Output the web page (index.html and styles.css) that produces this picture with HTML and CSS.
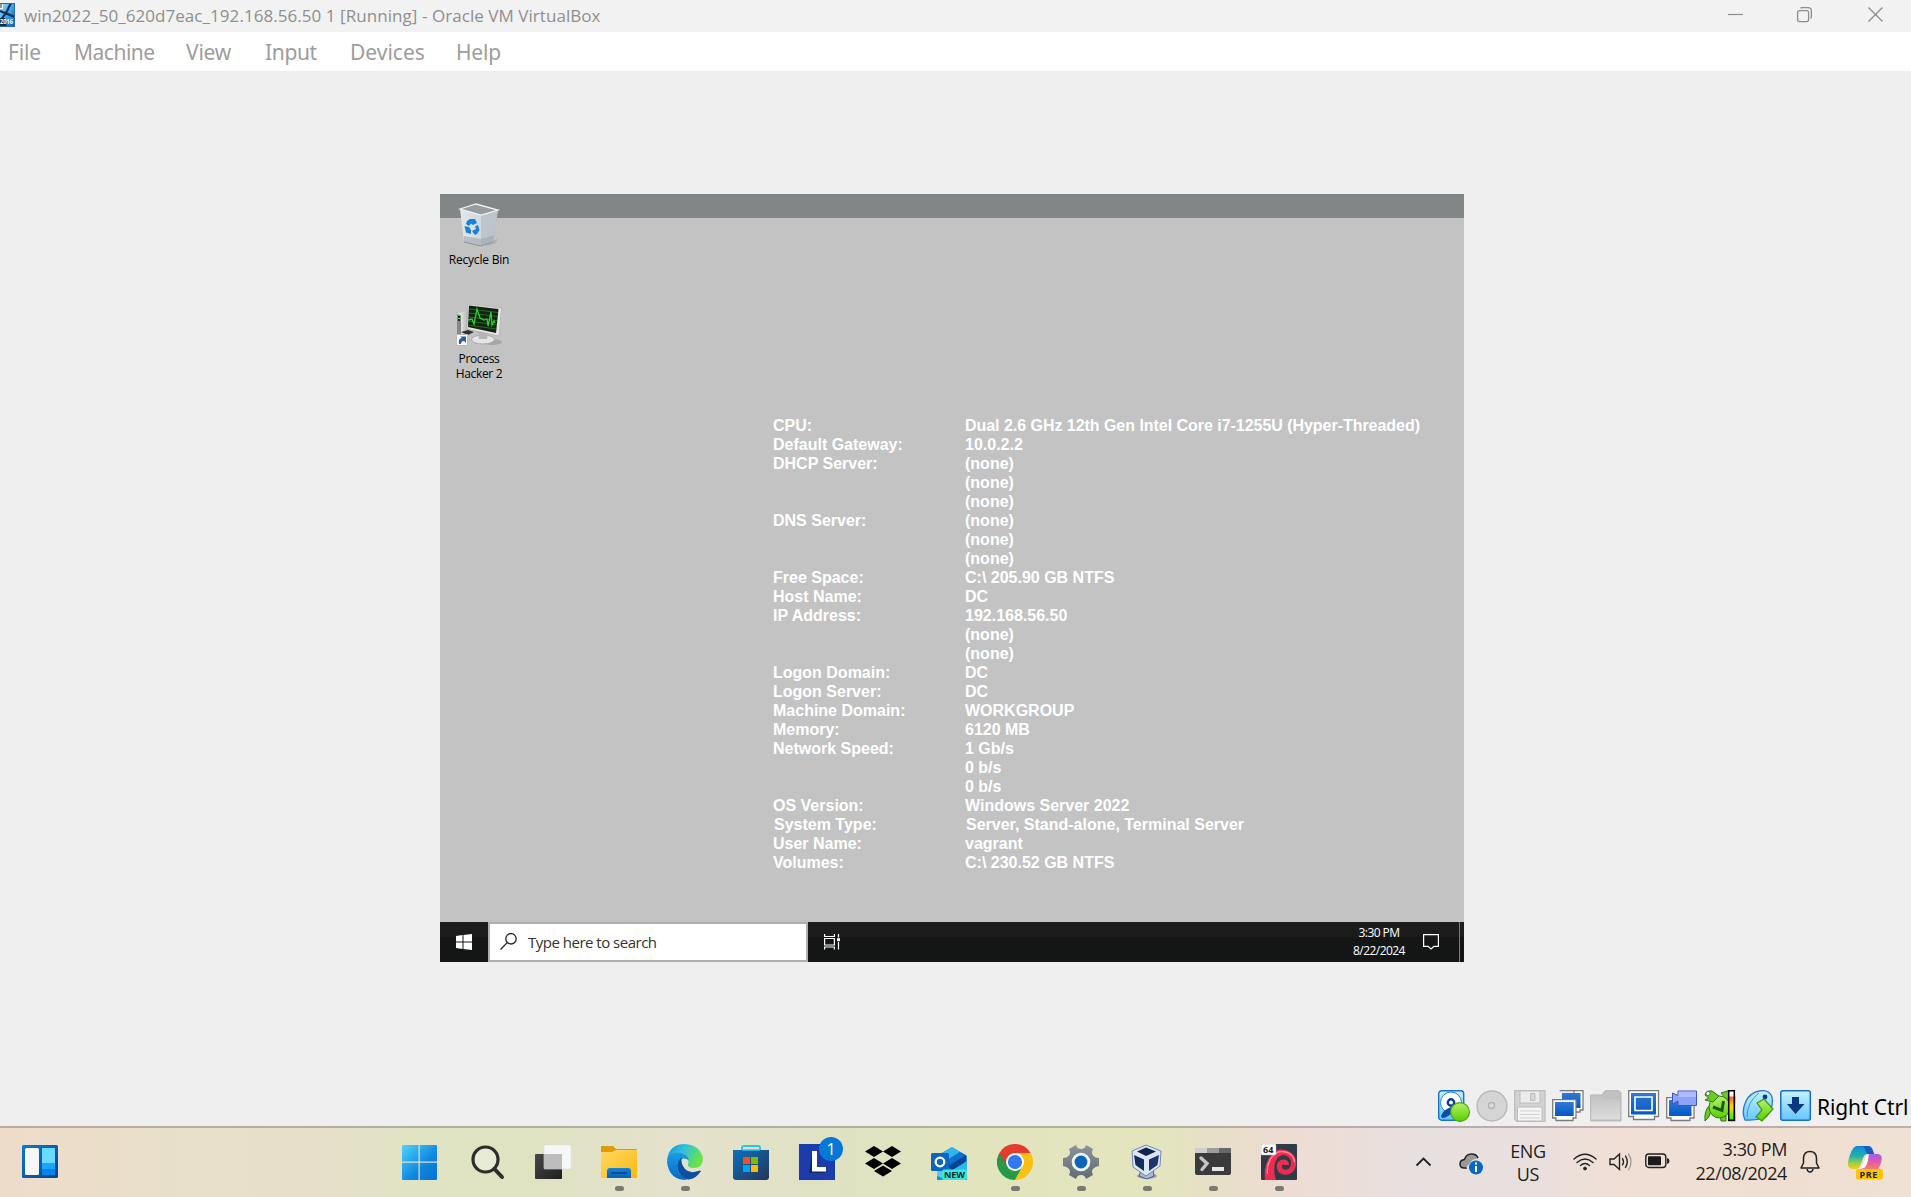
FILE: index.html
```html
<!DOCTYPE html>
<html lang="en">
<head>
<meta charset="utf-8">
<title>win2022_50_620d7eac_192.168.56.50 1 [Running] - Oracle VM VirtualBox</title>
<link rel="stylesheet" href="styles.css">
</head>
<body>
<div class="window">
  <header class="titlebar">
    <svg class="app-icon" width="15" height="24" viewBox="0 0 15 24">
      <defs><linearGradient id="ai" x1="0" y1="0" x2="1" y2="1"><stop offset="0" stop-color="#9fe0ff"/><stop offset=".5" stop-color="#35a5ee"/><stop offset="1" stop-color="#0b4fc0"/></linearGradient></defs>
      <rect width="15" height="24" fill="url(#ai)"/>
      <path d="M0 0H3V6H0z" fill="#f4f8fb"/><path d="M1 1v4" stroke="#333"/>
      <path d="M11 0L5 12M0 8L15 14M5 11L1 17" stroke="#12324f" stroke-width="2.2"/>
      <path d="M0 15H5L7 24H0z" fill="#102a4a"/>
      <text x="0" y="20.500" class="app-icon-text" textLength="13" lengthAdjust="spacingAndGlyphs">2016</text>
      <path d="M0 .5H14.5V23.5H0" fill="none" stroke="#2a6db0"/>
    </svg>
    <span class="title">win2022_50_620d7eac_192.168.56.50 1 [Running] - Oracle VM VirtualBox</span>
    <svg class="controls" width="156" height="16" viewBox="0 0 156 16" fill="none" stroke="#8d8d8d">
      <path d="M0 7.5H15" stroke-width="1.2"/>
      <rect x="69.6" y="3.6" width="11" height="11" rx="2" stroke-width="1.3"/>
      <path d="M72.500 1.200C73 .7 73.500 .6 74.500 .6H80Q83.400 .6 83.400 4V9Q83.400 11 82.500 11.500" stroke-width="1.3"/>
      <path d="M140.500 .5L154.500 14.500M154.500 .5L140.500 14.500" stroke-width="1.3"/>
    </svg>
  </header>
  <nav class="menubar">
    <span class="m-file">File</span><span class="m-machine">Machine</span><span class="m-view">View</span><span class="m-input">Input</span><span class="m-devices">Devices</span><span>Help</span>
  </nav>

  <main class="viewport">
    <section class="guest">
      <div class="guest-desktop">
        <div class="shortcuts">
          <div class="shortcut">
            <svg width="48" height="48" viewBox="0 0 48 48">
              <defs><linearGradient id="rb" x1="0" x2="1"><stop offset="0" stop-color="#e3e6ea"/><stop offset=".55" stop-color="#d3d8dd"/><stop offset="1" stop-color="#a9b2b9"/></linearGradient></defs>
              <path d="M28 40L42 36 39 41 30 43z" fill="#8b8b8b" opacity=".35"/>
              <path d="M4 6L25 12 42 7 37 39 25 43 8 39z" fill="url(#rb)"/>
              <path d="M25 12L42 7 37 39 25 43z" fill="#bcc5cc"/>
              <path d="M8 33L25 36 38 32 37 39 25 43 8 39z" fill="#9ea6ad" opacity=".6"/>
              <path d="M4 6L20 1 42 7 25 12z" fill="#979c9e"/>
              <path d="M4 6L20 1 42 7 25 12z" fill="none" stroke="#f1f3f4" stroke-width="1.300"/>
              <path d="M8 39L25 43 37 39" fill="none" stroke="#8e9499"/>
              <g fill="#1683d8"><path d="M11 18L14 16H19L21 20 17 22 15 20.500 13 23 10 21z"/><path d="M8.500 23L13 24 15 27V31L10 29.500z"/><path d="M16 28L20 26 19 23.500 22 22 23.500 27 21 31 19 32z"/></g>
            </svg>
            <p>Recycle Bin</p>
          </div>
          <div class="shortcut second">
            <svg width="48" height="48" viewBox="0 0 48 48">
              <defs><linearGradient id="ph" x1="0" x2="1"><stop offset="0" stop-color="#fff"/><stop offset="1" stop-color="#aaa"/></linearGradient></defs>
              <path d="M1 11L9 8 13 10V29L1 34z" fill="url(#ph)"/><path d="M1 11L5 12V34H1z" fill="#85878a"/><path d="M2 13H4V18H2z" fill="#222"/><path d="M2 15.500H4" stroke="#4f4"/>
              <ellipse cx="36" cy="39" rx="10" ry="3" fill="#888" opacity=".5"/>
              <ellipse cx="27" cy="36.500" rx="11.500" ry="4.500" fill="#e5e5e5" stroke="#a8a8a8"/>
              <path d="M22 28L32 30 31 36H23z" fill="#b4b4b4"/>
              <path d="M12 1L45.500 5 43 33 11 26z" fill="#e4e4e4" stroke="#aaa" stroke-width=".6"/>
              <path d="M13 2.500L42.500 6 40 30 12 24z" fill="#102212"/>
              <path d="M13 6L42 9.500M13 10L42 13.500M13 14L41 17.500M12.500 18L41 22M12.500 22L40 26" stroke="#28692b"/>
              <path d="M12 17L16 16 18 21 21 6 24 15 28 17 31 16 32 23 35 9 36 22 38 18 39 20" fill="none" stroke="#29cf33" stroke-width="1.300"/>
              <path d="M5 29l7-2 6 2-6 3z" fill="#333"/>
              <rect x=".5" y="31.500" width="11" height="11" fill="#fff" stroke="#bbb"/>
              <path d="M3 41Q2 35 6 35L4 33.500H10V40L8.300 38Q5 38 5 41z" fill="#2b5fa5"/>
            </svg>
            <p>Process<br>Hacker 2</p>
          </div>
        </div>
        <dl class="sysinfo">
          <dt>CPU:</dt><dd class="cpu">Dual 2.6 GHz 12th Gen Intel Core i7-1255U (Hyper-Threaded)</dd>
          <dt>Default Gateway:</dt><dd>10.0.2.2</dd>
          <dt>DHCP Server:</dt><dd>(none)<br>(none)<br>(none)</dd>
          <dt>DNS Server:</dt><dd>(none)<br>(none)<br>(none)</dd>
          <dt>Free Space:</dt><dd>C:\ 205.90 GB NTFS</dd>
          <dt>Host Name:</dt><dd>DC</dd>
          <dt>IP Address:</dt><dd>192.168.56.50<br>(none)<br>(none)</dd>
          <dt>Logon Domain:</dt><dd>DC</dd>
          <dt>Logon Server:</dt><dd>DC</dd>
          <dt>Machine Domain:</dt><dd>WORKGROUP</dd>
          <dt>Memory:</dt><dd>6120 MB</dd>
          <dt>Network Speed:</dt><dd>1 Gb/s<br>0 b/s<br>0 b/s</dd>
          <dt>OS Version:</dt><dd>Windows Server 2022</dd>
          <dt class="inset">System Type:</dt><dd class="inset">Server, Stand-alone, Terminal Server</dd>
          <dt>User Name:</dt><dd>vagrant</dd>
          <dt>Volumes:</dt><dd>C:\ 230.52 GB NTFS</dd>
        </dl>
      </div>
      <footer class="guest-taskbar">
        <svg class="g-start" width="16" height="16" viewBox="0 0 16 16" fill="#fff"><path d="M0 2L6.500 1V7.500H0zM7.500 .9L16 0V7.500H7.500zM0 8.500H6.500V15L0 14zM7.500 8.500H16V16L7.500 15z"/></svg>
        <div class="g-search">
          <svg width="18" height="17" viewBox="0 0 18 17" fill="none" stroke="#222" stroke-width="1.300"><circle cx="11" cy="5.800" r="5.200"/><path d="M7.200 9.600L.5 16.500"/></svg>
          <span>Type here to search</span>
        </div>
        <svg class="g-tasks" width="17" height="16" viewBox="0 0 17 16" fill="none" stroke="#fff" stroke-width="1.200"><path d="M.6 0V2.500H10.400V0M.6 15.500V13H10.400V15.500M.6 4.500H10.400V11H.6zM14.500 0V3.500M14.500 8V15.500"/><path d="M13 4.200H16V7.200H13z" fill="#fff" stroke="none"/></svg>
        <div class="g-clock">3:30 PM<br>8/22/2024</div>
        <svg class="g-note" width="16" height="16" viewBox="0 0 16 16" fill="none" stroke="#fff" stroke-width="1.200"><path d="M.6 .6H15.400V12.400H11L8 15 5 12.400H.6z"/></svg>
        <i class="g-peek"></i>
      </footer>
    </section>
  </main>

  <div class="statusbar">
    <svg width="32" height="32" viewBox="0 0 32 32">
      <defs><linearGradient id="cy" x1="0" y1="0" x2="0" y2="1"><stop offset="0" stop-color="#c4f2ff"/><stop offset="1" stop-color="#66c6ff"/></linearGradient><linearGradient id="gn" x1="0" y1="0" x2="0" y2="1"><stop offset="0" stop-color="#b6f06a"/><stop offset="1" stop-color="#58cf00"/></linearGradient><linearGradient id="bl" x1="0" y1="0" x2="0" y2="1"><stop offset="0" stop-color="#3377d6"/><stop offset="1" stop-color="#0259c8"/></linearGradient><linearGradient id="gy" x1="0" y1="0" x2="0" y2="1"><stop offset="0" stop-color="#c2c2c2"/><stop offset="1" stop-color="#dedede"/></linearGradient></defs>
      <rect x=".7" y=".7" width="25" height="29.500" rx="3" fill="url(#cy)" stroke="#1a6fd0" stroke-width="1.400"/>
      <circle cx="13" cy="12.500" r="10.500" fill="#fff" stroke="#2a7fd6"/><circle cx="13" cy="12.500" r="3.200" fill="#fff" stroke="#0b3e92" stroke-width="2.400"/>
      <path d="M3 26Q5 20 13 17L15 22Q9 28 4 28z" fill="#0c4cae"/>
      <circle cx="22" cy="22" r="9.400" fill="url(#gn)" stroke="#4ea414" stroke-width="1.200"/>
    </svg>
    <svg width="32" height="32" viewBox="0 0 32 32"><circle cx="16" cy="16" r="15" fill="#d5d5d5" stroke="#b9b9b9" stroke-width="1.400"/><circle cx="15.500" cy="15.500" r="3" fill="#ddd" stroke="#b3b3b3" stroke-width="1.300"/></svg>
    <svg width="32" height="32" viewBox="0 0 32 32" stroke="#bdbdbd"><path d="M.7 .7H31V31.300H3L.7 29z" fill="#d2d2d2" stroke-width="1.300"/><path d="M6 1H26V13H6z" fill="#ececec"/><path d="M16.500 3.500H21V10.500H16.500z" fill="#d5d5d5"/><path d="M3.500 17H28V31H3.500z" fill="#f4f4f4"/><path d="M6 21H26M6 24.500H26M6 28H26" stroke="#d2d2d2"/></svg>
    <svg width="32" height="32" viewBox="0 0 32 32"><path d="M7.600 .7H31V20H28V22H22V.7" fill="#fff" stroke="#7b7b7b" stroke-width="1.300"/><path d="M10 3H28.500V18H10z" fill="url(#bl)"/><path d="M.7 9.700H24V28H21V30.500H4V28H.7z" fill="#fff" stroke="#7b7b7b" stroke-width="1.300"/><path d="M3 12H21.700V26H3z" fill="url(#bl)"/></svg>
    <svg width="32" height="32" viewBox="0 0 32 32"><path d="M.7 5H12L15 .7H29L31 3V31H.7z" fill="#c1c1c1" stroke="#b5b5b5"/><path d="M.7 5.500H13L15.500 8H30.500V30H.7z" fill="url(#gy)" stroke="#bcbcbc"/></svg>
    <svg width="32" height="32" viewBox="0 0 32 32"><path d="M.7 .7H30.500V26.500H26.500V29.500H5.500V26.500H.7z" fill="#fff" stroke="#7b7b7b" stroke-width="1.300"/><path d="M3 3H28V24.500H3z" fill="url(#bl)"/><path d="M7 7H24V20.500H7z" fill="none" stroke="#fff" stroke-width="1.600"/></svg>
    <svg width="32" height="32" viewBox="0 0 32 32"><path d="M.7 7.700H28V28H24V30.500H5V28H.7z" fill="#fff" stroke="#7b7b7b" stroke-width="1.300"/><path d="M3 10H25.500V26H3z" fill="url(#bl)"/><path d="M6.500 3L12 5.500V1H30.500V15.500H12V11L6.500 14z" fill="#8fa2f8" stroke="#4055bd"/><path d="M12.500 1.500H30V7H12.500z" fill="#bac7ff" opacity=".7"/></svg>
    <svg width="32" height="32" viewBox="0 0 32 32"><defs><linearGradient id="ld" x1="0" y1="0" x2="0" y2="1"><stop offset="0" stop-color="#f52"/><stop offset=".4" stop-color="#fd0"/><stop offset="1" stop-color="#1e2"/></linearGradient></defs><g fill="#6cca20" stroke="#2b7a12"><path d="M17 3L24 .8 30 3V10L22 9z"/><path d="M6 15Q0 20 1 31Q6 27 7 21z"/><path d="M16 26H22V31H17z"/><ellipse cx="15.500" cy="17" rx="10.500" ry="11" fill="url(#gn)"/><path d="M1 5Q2 0 8 1L15 6 9 12 1 10 5 8z"/></g><circle cx="4" cy="3.500" r="2" fill="#fff" stroke="#333" stroke-width=".6"/><path d="M9 17L18 20.500 19.500 11" fill="none" stroke="#1d5a14" stroke-width="3"/><path d="M25 1H30V30H25z" fill="#fff"/><path d="M24 6.500H31.500V31.500H24z" fill="url(#ld)"/><path d="M24.700 .7H30.300V30.300H24.700z" fill="none" stroke="#000" stroke-width="1.500"/></svg>
    <svg width="32" height="32" viewBox="0 0 32 32"><path d="M3 30Q-1 22 4 11 8 3 17 1 27 -1 30 7 32 18 24 27 14 31 3 30z" fill="url(#cy)" stroke="#2b78c9" stroke-width="1.300"/><path d="M5 27Q5 12 17 3" fill="none" stroke="#3d92de"/><circle cx="23" cy="7" r="2.400" fill="#0b3b8e"/><path d="M15 13L22 9 31 19 20 31 14 27 20 20z" fill="url(#gn)" stroke="#3f9612" stroke-width="1.200"/></svg>
    <svg width="32" height="32" viewBox="0 0 32 32"><rect x=".8" y=".8" width="29.500" height="29.500" rx="2" fill="url(#cy)" stroke="#1a6fc4" stroke-width="1.500"/><path d="M12 7H19V14H24.500L15.500 24 7 14H12z" fill="#07377f"/></svg>
    <span class="hostkey">Right Ctrl</span>
  </div>
</div>

<div class="taskbar">
  <svg class="widgets" width="36" height="33" viewBox="0 0 36 33"><defs><linearGradient id="wg" x1="0" y1="0" x2="1" y2="1"><stop offset="0" stop-color="#0a7bd4"/><stop offset="1" stop-color="#0b4286"/></linearGradient></defs><rect width="36" height="33" rx="1.500" fill="url(#wg)"/><rect x="3" y="3" width="14" height="27" rx="1.500" fill="#f7f7f7"/><path d="M20 3H33V18H20z" fill="#68dbff"/><path d="M20 18H33V24H20z" fill="#1ba4fb"/><path d="M20 24H33V30H20z" fill="#0385ec"/></svg>

  <div class="apps">
    <div class="app"><svg width="36" height="36" viewBox="0 0 36 36"><defs><linearGradient id="ws" gradientUnits="userSpaceOnUse" x1="0" y1="0" x2="36" y2="36"><stop offset="0" stop-color="#4fd5ff"/><stop offset=".6" stop-color="#0f86dd"/><stop offset="1" stop-color="#0670d2"/></linearGradient></defs><path d="M1 1H16.500V17.500H0V2Q0 1 1 1zM17.700 1H34Q35 1 35 2V17.500H17.700zM0 18.700H16.500V36H1Q0 36 0 35zM17.700 18.700H35V35Q35 36 34 36H17.700z" fill="url(#ws)"/></svg></div>
    <div class="app"><svg width="36" height="36" viewBox="0 0 36 36" fill="none" stroke="#2d2d2d"><circle cx="16.500" cy="15.500" r="12.500" fill="#fff" fill-opacity=".3" stroke-width="3.200"/><path d="M25.500 25L33 33" stroke-width="4" stroke-linecap="round"/></svg></div>
    <div class="app"><svg width="36" height="36" viewBox="0 0 36 36"><defs><linearGradient id="tv" x1="0" y1="0" x2="1" y2="1"><stop offset="0" stop-color="#484848"/><stop offset="1" stop-color="#1f1f1f"/></linearGradient></defs><rect y="10" width="27" height="25" rx="1" fill="url(#tv)"/><rect x="9" y="1" width="27" height="24" rx="1" fill="#f7f7f7" stroke="#ddd" stroke-width=".6"/><path d="M9 10H27V25H9z" fill="#bdbdbd"/></svg></div>
    <div class="app open"><svg width="36" height="36" viewBox="0 0 36 36"><defs><linearGradient id="fe" x1="0" y1="0" x2="1" y2="1"><stop offset="0" stop-color="#ffda63"/><stop offset="1" stop-color="#fbb612"/></linearGradient><linearGradient id="fb" x1="0" y1="0" x2="0" y2="1"><stop offset="0" stop-color="#1683d8"/><stop offset="1" stop-color="#0861b2"/></linearGradient></defs><path d="M0 3Q0 2 1 2H12L15 5H35Q36 5 36 6V12H0z" fill="#dd9c0c"/><path d="M0 8H11L15 6H36V34H0z" fill="url(#fe)"/><path d="M6 34V27Q6 24 9 24H27Q30 24 30 27V34z" fill="url(#fb)"/><path d="M11 29H25" stroke="#0a4c8f" stroke-width="1.800" stroke-linecap="round"/></svg></div>
    <div class="app open"><svg width="36" height="36" viewBox="0 0 36 36"><defs><linearGradient id="e1" x1="0" y1="0" x2="1" y2=".4"><stop offset="0" stop-color="#178cd9"/><stop offset=".45" stop-color="#30bfe3"/><stop offset="1" stop-color="#69e24b"/></linearGradient><linearGradient id="e2" x1="0" y1="0" x2="0" y2="1"><stop offset="0" stop-color="#1b9de2"/><stop offset="1" stop-color="#0568c8"/></linearGradient></defs><path d="M0 16Q2 0 18 0 33 1 36 14 36 24 27 24 20 24 21 20 23 17 18 13 9 7 0 16z" fill="url(#e1)"/><path d="M0 18Q0 9 11 8.500 20 9 22 16 15 12 11 18 7 28 20 36 2 36 0 18z" fill="url(#e2)"/><path d="M15 13Q7 20 12 29 17 36 22 35.500 30 34 34 27 33 26 31 27 23 30 18 25 13 19 15 13z" fill="#0c50a0"/></svg></div>
    <div class="app"><svg width="36" height="36" viewBox="0 0 36 36"><defs><linearGradient id="st" x1="0" y1="0" x2="1" y2="1"><stop offset="0" stop-color="#0c70bd"/><stop offset="1" stop-color="#263459"/></linearGradient></defs><path d="M9 10V4Q9 2 11 2H25Q27 2 27 4V10" fill="none" stroke="#29c3f4" stroke-width="2"/><path d="M0 6H36V33Q36 36 33 36H3Q0 36 0 33z" fill="url(#st)"/><path d="M9 6H27" stroke="#29c3f4" stroke-width="1.500"/><path d="M10 13H17V20H10z" fill="#f25022"/><path d="M18 13H25V20H18z" fill="#7fba00"/><path d="M10 21H17V28H10z" fill="#00a4ef"/><path d="M18 21H25V28H18z" fill="#ffb900"/></svg></div>
    <div class="app"><svg width="36" height="36" viewBox="0 0 36 36"><rect width="36" height="36" fill="#1c3cab"/><path d="M13 8L10 29H27L18 26z" fill="#102a57"/><path d="M13 7H18V23H27V27.500H13z" fill="#fff"/></svg><span class="badge">1</span></div>
    <div class="app"><svg width="36" height="36" viewBox="0 0 36 36"><path d="M9 2L18 7.500 9 13 0 7.500zM27 2L36 7.500 27 13 18 7.500zM9 14L18 19.500 9 25 0 19.500zM27 14L36 19.500 27 25 18 19.500zM18 21.500L27 27 18 32.500 9 27z"/></svg></div>
    <div class="app"><svg width="36" height="36" viewBox="0 0 36 36"><path d="M6 12L21 3 36 12V36H6z" fill="#1593dd"/><path d="M11 9L21 3 29 8 18 15z" fill="#2fb5ec"/><path d="M17 20L35 11V18L20 28z" fill="#064392"/><path d="M16 16L29 8 35 11 19 21z" fill="#0b70cf"/><path d="M6 19L18 26 12 34 6 32z" fill="#55caf0"/><path d="M20 27L36 17V30z" fill="#2eb9ee"/><rect y="9" width="18" height="18" rx="1.500" fill="#0b66c2"/><circle cx="9" cy="18" r="4.300" fill="none" stroke="#fff" stroke-width="2.300"/><rect x="11" y="25.500" width="25" height="10.500" rx="2" fill="#37e8da"/><text x="13" y="34" class="new-text">NEW</text></svg></div>
    <div class="app open"><svg width="36" height="36" viewBox="0 0 36 36"><path d="M2.400 9A18 18 0 0 0 18 36L25.800 22.500 18 18z" fill="#269846"/><path d="M18 9H33.600A18 18 0 0 1 18 36L25.800 22.500z" fill="#fbc016"/><path d="M2.400 9A18 18 0 0 1 33.600 9H18L10.200 22.500z" fill="#e33b2e"/><circle cx="18" cy="18" r="9" fill="#fff"/><circle cx="18" cy="18" r="7.100" fill="#3279ee"/></svg></div>
    <div class="app open"><svg width="36" height="36" viewBox="0 0 36 36"><defs><linearGradient id="gr" x1="0" y1="0" x2="0" y2="1"><stop offset="0" stop-color="#8b949b"/><stop offset="1" stop-color="#626b73"/></linearGradient></defs><path d="M13 1Q14 5 18 5T23 1L30 5Q28 9 30 11.500T36 14V22Q32 22.500 30 25T30 31L23 35Q22 31 18 31T13 35L6 31Q8 27.500 6 25T0 22V14Q4 14 6 11.500T6 5z" fill="url(#gr)"/><circle cx="18" cy="18" r="9.300" fill="#f1f4f7"/><circle cx="18" cy="18" r="6.400" fill="#0b65b8"/></svg></div>
    <div class="app open"><svg width="36" height="36" viewBox="0 0 36 36"><ellipse cx="18" cy="32" rx="10" ry="3" fill="#929eb5"/><path d="M12 26H24L25 32 18 35 10 32z" fill="#aab9d2" stroke="#4e638c"/><path d="M3 7L17 1 32 7 31 22 17 32 4 23z" fill="#dbe5f5" stroke="#7388b3"/><path d="M8 7.500L17 3.500 27 7.500 17 12z" fill="#13244a"/><path d="M5 11L15 15.500V27L6.500 21z" fill="#162c58"/><path d="M20 15.500L30 11 28.500 21 20 27z" fill="#1b3564"/></svg></div>
    <div class="app open"><svg width="36" height="36" viewBox="0 0 36 36"><path d="M0 6Q0 4 2 4H34Q36 4 36 6V29Q36 31 34 31H2Q0 31 0 29z" fill="#3b3b3b"/><path d="M0 9V5Q0 4 1 4H12V9z" fill="#cfcfcf"/><path d="M12 4H24V9H12z" fill="#9b9b9b"/><path d="M24 4H35Q36 4 36 5V9H24z" fill="#686868"/><path d="M6 14L12 19.500 7 25.500" fill="none" stroke="#c5c5c5" stroke-width="3.400" stroke-linecap="round"/><path d="M17 23H29V27H17z" fill="#e6e6e6"/></svg></div>
    <div class="app open"><svg width="36" height="36" viewBox="0 0 36 36"><rect width="36" height="36" rx="1" fill="#303b48"/><path d="M4 36C2 22 9 5 21 5.500L22 11C14 12 11 24 15 36z" fill="#ee2c52"/><path d="M20 8.200C29 8 33 14 32.700 19.500C32 26.500 27.500 28.700 23.500 28.300C17.500 27.500 17 20.500 20.500 18.500C23 17.300 25.500 18.500 25.500 21" fill="none" stroke="#ee2c52" stroke-width="5"/><path d="M6.500 30C5 20 11 8.500 20 7.500 28 7 33 12 33.500 18" fill="none" stroke="#ff8795" stroke-width="1.400"/><rect width="15" height="11" rx="1" fill="#fff" stroke="#aaa" stroke-width=".5"/><text x="2" y="9" class="x64-text">64</text></svg></div>
  </div>

  <div class="tray">
    <svg class="t-chev" width="17" height="10" viewBox="0 0 17 10" fill="none" stroke="#222" stroke-width="1.800"><path d="M1.500 8.500L8.500 1.500 15.500 8.500"/></svg>
    <svg class="t-cloud" width="25" height="22" viewBox="0 0 25 22"><path d="M5 15Q1 15 1 11 1 7 5.500 6.500 7 1 12.500 1 17.500 1 19 6 16 5 13 8L8 15z" fill="#999"/><path d="M8 15H5Q1 15 1 11 1 7 5.500 6.500 7 1 12.500 1 17.500 1 19 5" fill="none" stroke="#222" stroke-width="1.500"/><path d="M8 15L14 8Q16 6 20 7" fill="none" stroke="#ddd" stroke-width="2"/><circle cx="17" cy="14.500" r="7" fill="#0867c1"/><path d="M17 13V19M17 9.500V11.500" stroke="#fff" stroke-width="2"/></svg>
    <div class="t-lang">ENG<br>US</div>
    <svg class="t-wifi" width="24" height="18" viewBox="0 0 24 18" fill="none" stroke="#222" stroke-width="1.400" stroke-linecap="round"><path d="M1 6Q12 -3.500 23 6M4 9.500Q12 2.500 20 9.500M7.500 12.500Q12 8.500 16.500 12.500"/><circle cx="12" cy="15.500" r="1.500" fill="#222" stroke-width=".8"/></svg>
    <svg class="t-vol" width="24" height="20" viewBox="0 0 24 20" fill="none" stroke="#222" stroke-width="1.400" stroke-linecap="round"><path d="M1 7H5L10.500 2V17.500L5 12.500H1zM13.500 6.500Q15.500 9.700 13.500 13M16.500 4Q20 9.700 16.500 15.500"/><path d="M19.500 2Q24.500 9.700 19.500 18" stroke="#aaa19c"/></svg>
    <svg class="t-bat" width="25" height="16" viewBox="0 0 25 16"><rect x=".8" y="1" width="20" height="13.500" rx="3" fill="none" stroke="#222" stroke-width="1.400"/><rect x="3" y="3.200" width="13" height="9" rx="1" fill="#1a1a1a"/><path d="M22 5Q24.500 5.500 24.500 8T22 11z" fill="#222"/></svg>
    <div class="t-clock">3:30 PM<br>22/08/2024</div>
    <svg class="t-bell" width="20" height="23" viewBox="0 0 20 23" fill="none" stroke="#222" stroke-width="1.500" stroke-linejoin="round"><path d="M1 18L3.500 13V8Q4 1.500 10 1.500T16.500 8V13L19 18zM7 19Q7.500 22 10 22T13 19"/></svg>
    <svg class="t-copilot" width="36" height="36" viewBox="0 0 36 36"><defs><linearGradient id="c1" x1="0" y1="0" x2="0" y2="1"><stop offset="0" stop-color="#118bd8"/><stop offset=".45" stop-color="#23b3ae"/><stop offset=".75" stop-color="#a2cf3d"/><stop offset="1" stop-color="#f5cf16"/></linearGradient><linearGradient id="c2" x1="0" y1="0" x2="0" y2="1"><stop offset="0" stop-color="#a25bf0"/><stop offset=".5" stop-color="#e65c9d"/><stop offset="1" stop-color="#fb8a53"/></linearGradient></defs><path d="M9 2H21Q25 2 26 7L27 10H20Q17 10 15 17 13 24 10 25H5Q0 24 1 18 4 4 9 2z" fill="url(#c1)"/><path d="M12 2H21Q25 2 27 10H20L17 3z" fill="#155ec7"/><path d="M23 10H31Q36 11 34.500 17 32 27 28 27H12Q16 26 18 18 20 10 23 10z" fill="url(#c2)"/><path d="M22 10Q19 11 17 18T12 25L17 24Q20 22 21 16z" fill="#fff"/><rect x="9" y="25" width="27" height="10.500" rx="2.500" fill="#fcc50b"/><text x="12.500" y="33.500" class="pre-text">PRE</text></svg>
  </div>
</div>
</body>
</html>
```
FILE: styles.css
```css
* { box-sizing: border-box; }
body { margin: 0; width: 1911px; height: 1197px; overflow: hidden; display: flex; flex-direction: column; font-family: "Open Sans", "Noto Sans", sans-serif; }
svg { display: block; flex: none; }
p, dl, dd { margin: 0; }

.window { height: 1126px; display: flex; flex-direction: column; background: #efefef; }
.titlebar { height: 32px; background: #f2f2f2; display: flex; align-items: flex-start; }
.app-icon { margin-top: 3px; }
.app-icon-text { font: bold 7px "Open Sans", sans-serif; fill: #fff; }
.title { margin-left: 9px; flex: 1; font-size: 17px; line-height: 31px; letter-spacing: .055px; color: #8f8f8f; white-space: nowrap; }
.controls { margin: 7px 27px 0 0; }
.menubar { height: 39px; background: #fff; display: flex; padding-left: 8px; font: 21px/40px "Noto Sans", sans-serif; letter-spacing: -.2px; color: #9d9d9d; }
.m-file { width: 66px; }
.m-machine { width: 112px; letter-spacing: -.5px; }
.m-view { width: 79px; }
.m-input { width: 85px; letter-spacing: -.35px; }
.m-devices { width: 106px; letter-spacing: 0; }

.viewport { flex: 1; padding: 123px 0 0 440px; }
.guest { width: 1024px; height: 768px; display: flex; flex-direction: column; background: #c3c3c3; }
.guest-desktop { flex: 1; display: flex; background: linear-gradient(#828686 24px, #c3c3c3 24px); }
.shortcuts { width: 333px; }
.shortcut { width: 78px; padding-top: 9px; font-size: 12px; line-height: 15px; letter-spacing: -.2px; color: #000; text-align: center; }
.shortcut svg { margin-left: 16px; }
.shortcut p { margin-top: 1px; }
.shortcut.second { padding-top: 36px; letter-spacing: -.35px; }
.shortcut.second p { margin-top: 0; }
.sysinfo { margin-top: 222px; display: grid; grid-template-columns: 192px auto; align-content: start; font: bold 16px/19px "Liberation Sans", Arial, sans-serif; color: #fff; white-space: nowrap; }
.cpu { letter-spacing: -.035px; }
.inset { padding-left: 1px; }

.guest-taskbar { height: 40px; display: flex; align-items: flex-start; background: linear-gradient(#1c1c1c 15px, #131615 15px); color: #fff; }
.g-start { margin: 12px 16px 0; }
.g-search { width: 320px; height: 40px; padding-left: 10px; border: 2px solid #b0b0b0; background: #fff; display: flex; align-items: flex-start; color: #333; font-size: 15px; line-height: 37px; letter-spacing: -.5px; }
.g-search svg { margin: 9px 10px 0 0; }
.g-tasks { margin: 12px 0 0 16px; }
.g-clock { width: 60px; margin: 2px 14px 0 auto; font-size: 12px; line-height: 18px; letter-spacing: -.55px; text-align: center; white-space: nowrap; }
.g-note { margin-top: 12px; }
.g-peek { width: 1px; height: 40px; margin: 0 4px 0 20px; background: #7b7b7b; }

.statusbar { height: 51px; padding: 15px 0 0 1438px; display: flex; gap: 6px; }
.hostkey { margin-left: -1px; font: 21px/34px "Noto Sans", sans-serif; letter-spacing: -.1px; color: #000; white-space: nowrap; }

.taskbar { height: 71px; display: flex; align-items: flex-start; border-top: 2px solid rgba(70, 60, 70, .3); background-clip: border-box;
  background: linear-gradient(90deg, #eedcc9, #e7e0ca 200px, #e8dfca 300px, #e0e3c4 420px, #dfe3c1 520px, #e5e1cd 680px, #dfe2c3 830px, #e1e4be 950px, #e4e5bd 1150px, #e7dfc8 1220px, #eedcd3 1285px, #e8e0e0 1420px, #e9dfde 1520px, #f1dfd6 1620px, #efdfd2 1780px, #efe1d5); color: #1e1e1e; }
.widgets { margin: 17px 0 0 22px; }
.apps { margin: 16px 0 0 344px; display: flex; gap: 30px; }
.app { width: 36px; height: 50px; position: relative; display: flex; flex-direction: column; align-items: center; gap: 6px; }
.apps { margin-left: 345px; }
.app:first-child svg { margin-left: -2px; }
.app.open::after { content: ""; width: 9px; height: 5px; border-radius: 3px; background: #7c7a70; }
.badge { position: absolute; left: 20px; top: -7px; width: 24px; height: 24px; border-radius: 12px; background: #0579d5; color: #fff; font-size: 16px; line-height: 24px; text-align: center; }
.new-text { font: bold 9px "Open Sans", sans-serif; fill: #0b2730; }
.x64-text { font: bold 9px "Open Sans", sans-serif; fill: #222; }
.pre-text { font: bold 9px "Open Sans", sans-serif; fill: #2b2200; letter-spacing: .6px; }

.tray { margin-left: 118px; display: flex; align-items: flex-start; font-size: 18px; line-height: 24px; white-space: nowrap; }
.t-chev { margin-top: 29px; }
.t-cloud { margin: 25px 0 0 27px; }
.t-lang { width: 60px; margin: 12px 0 0 14px; text-align: center; letter-spacing: -.3px; line-height: 23px; }
.t-wifi { margin: 25px 0 0 15px; }
.t-vol { margin: 24px 0 0 12px; }
.t-bat { margin: 25px 0 0 12px; }
.t-clock { width: 117px; margin-top: 9px; text-align: right; letter-spacing: -.4px; }
.t-bell { margin: 22px 0 0 13px; }
.t-copilot { margin: 16px 0 0 27px; }
```
